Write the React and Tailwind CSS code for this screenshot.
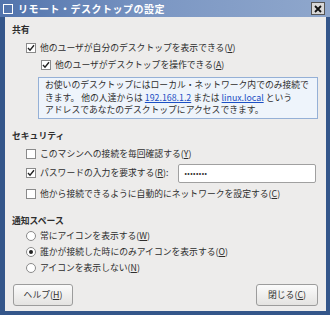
const font = { fontFamily: '"Noto Sans CJK JP", "DejaVu Sans", sans-serif' };

const Check = ({ checked }) => (
  <span className="inline-flex w-[10px] h-[10px] border border-[#8a8a8a] bg-white items-center justify-center shrink-0">
    {checked && (
      <svg width="8" height="8" viewBox="0 0 8 8">
        <path d="M1 4 L3 6.2 L7 1.2" fill="none" stroke="#222" strokeWidth="1.4" />
      </svg>
    )}
  </span>
);

const Radio = ({ checked }) => (
  <span className="inline-flex w-[10px] h-[10px] rounded-full border border-[#8a8a8a] bg-white items-center justify-center shrink-0">
    {checked && <span className="w-[4px] h-[4px] rounded-full bg-[#222]" />}
  </span>
);

const Label = ({ text, mnemonic, tail = '' }) => (
  <span>
    {text}(<span className="underline">{mnemonic}</span>){tail}
  </span>
);

const Row = ({ indent = 'pl-[14px]', h = 'h-[17px]', className = '', box, children }) => (
  <div className={`flex items-center gap-[4px] ${h} ${indent} ${className}`}>
    {box}
    {children}
  </div>
);

const Button = ({ text, mnemonic, className = '' }) => (
  <button
    className={`h-[22px] rounded-[3px] border border-[#9c9c9c] bg-gradient-to-b from-[#fbfbfb] to-[#e4e3e1] text-[#333] ${className}`}
  >
    <Label text={text} mnemonic={mnemonic} />
  </button>
);

export default function App() {
  return (
    <div
      className="w-[330px] h-[315px] bg-[#34568a] flex flex-col text-[8.8px] leading-[12px] text-[#2e2e2e]"
      style={font}
    >
      {/* title bar */}
      <div className="h-[17px] flex items-center bg-gradient-to-r from-[#5274ac] via-[#7d98c4] to-[#8fa7cc] px-[3px]">
        <span className="w-[10px] h-[10px] border border-white mr-[5px]" />
        <span className="text-white font-bold text-[10px] tracking-[0.5px] flex-1">リモート・デスクトップの設定</span>
        <span className="w-[14px] h-[13px] bg-[#d8d8d8] border border-[#555] flex items-center justify-center mr-[2px]">
          <svg width="8" height="8" viewBox="0 0 8 8">
            <path d="M1 1 L7 7 M7 1 L1 7" stroke="#111" strokeWidth="1.8" />
          </svg>
        </span>
      </div>

      {/* body */}
      <div className="flex-1 ml-[5px] mr-[4px] mb-[4px] bg-[#edeceb] flex flex-col pl-[7px] pr-[8px] pt-[6px]">
        <div className="font-bold h-[13px] leading-[13px]">共有</div>
        <div className="mt-[3px]">
          <Row box={<Check checked />}>
            <Label text="他のユーザが自分のデスクトップを表示できる" mnemonic="V" />
          </Row>
          <Row indent="pl-[29px]" box={<Check checked />}>
            <Label text="他のユーザがデスクトップを操作できる" mnemonic="A" />
          </Row>
        </div>
        <div className="ml-[26px] mt-[4px] border border-[#95b0d6] bg-[#eef4fb] px-[6px] py-[1px] leading-[12.5px]">
          <div>お使いのデスクトップにはローカル・ネットワーク内でのみ接続で</div>
          <div>
            きます。 他の人達からは <span className="text-[#1b4fc4] underline">192.168.1.2</span> または{' '}
            <span className="text-[#1b4fc4] underline">linux.local</span> という
          </div>
          <div>アドレスであなたのデスクトップにアクセスできます。</div>
        </div>

        <div className="font-bold h-[13px] leading-[13px] mt-[10px]">セキュリティ</div>
        <Row h="h-[18px]" className="mt-[3px]" box={<Check />}>
          <Label text="このマシンへの接続を毎回確認する" mnemonic="Y" />
        </Row>
        <Row h="h-[19px]" className="mt-[1px]" box={<Check checked />}>
          <Label text="パスワードの入力を要求する" mnemonic="R" tail=":" />
          <div className="ml-[6px] mr-[2px] flex-1 h-[19px] bg-white border border-[#a0a0a0] rounded-[2px] flex items-center px-[5px] text-[7px] tracking-[0.5px]">
            ••••••••
          </div>
        </Row>
        <Row h="h-[18px]" className="mt-[2px]" box={<Check />}>
          <Label text="他から接続できるように自動的にネットワークを設定する" mnemonic="C" />
        </Row>

        <div className="font-bold h-[13px] leading-[13px] mt-[11px]">通知スペース</div>
        <div className="mt-[1px]">
          <Row h="h-[16px]" box={<Radio />}>
            <Label text="常にアイコンを表示する" mnemonic="W" />
          </Row>
          <Row h="h-[16px]" box={<Radio checked />}>
            <Label text="誰かが接続した時にのみアイコンを表示する" mnemonic="O" />
          </Row>
          <Row h="h-[16px]" box={<Radio />}>
            <Label text="アイコンを表示しない" mnemonic="N" />
          </Row>
        </div>

        <div className="mt-auto mb-[5px] flex justify-between">
          <Button text="ヘルプ" mnemonic="H" className="w-[60px] ml-[1px]" />
          <Button text="閉じる" mnemonic="C" className="w-[62px]" />
        </div>
      </div>
    </div>
  );
}
